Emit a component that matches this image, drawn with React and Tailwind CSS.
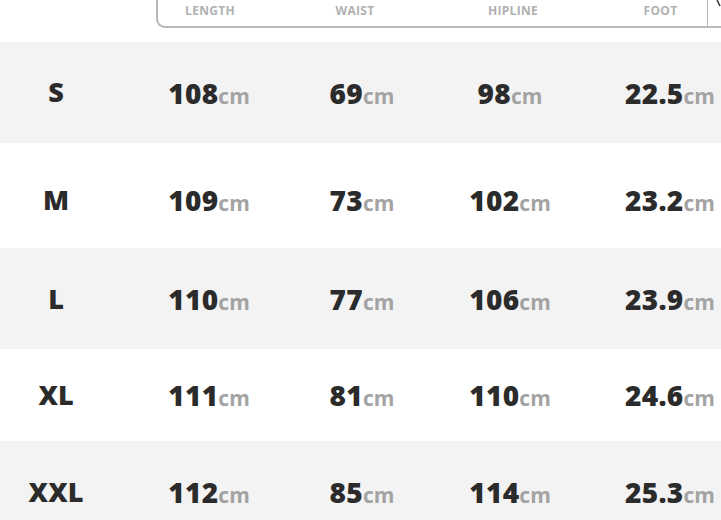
const rows = [
  { size: 'S', vals: ['108', '69', '98', '22.5'], h: 'h-[101px]', bg: 'bg-[#f4f3f4]', pt: 'pt-0' },
  { size: 'M', vals: ['109', '73', '102', '23.2'], h: 'h-[105px]', bg: 'bg-white', pt: 'pt-[9px]' },
  { size: 'L', vals: ['110', '77', '106', '23.9'], h: 'h-[101px]', bg: 'bg-[#f4f3f4]', pt: 'pt-px' },
  { size: 'XL', vals: ['111', '81', '110', '24.6'], h: 'h-[92px]', bg: 'bg-white', pt: 'pt-0' },
  { size: 'XXL', vals: ['112', '85', '114', '25.3'], h: 'h-[102px]', bg: 'bg-[#f4f3f4]', pt: 'pt-0' },
];

function Value({ v }) {
  return (
    <span className="flex items-baseline justify-center">
      <span className="text-[28px] font-extrabold tracking-[0.3px] text-[#2b2b2b]">{v}</span>
      <span className="text-[21px] font-bold text-[#a3a3a3]">cm</span>
    </span>
  );
}

export default function App() {
  return (
    <div className="relative h-[520px] w-[721px] overflow-hidden bg-white font-['Open_Sans',sans-serif]">
      <header className="flex h-[42px] items-start">
        <div className="w-[156px] shrink-0" />
        <div className="flex h-[28px] flex-1 rounded-bl-[9px] border-b-2 border-l-2 border-[#b8b8b8] text-[12px] font-bold leading-none tracking-[0.3px] text-[#b0b0b0]">
          <span className="flex w-[104px] items-center justify-center pb-[5px]">LENGTH</span>
          <span className="flex w-[186px] items-center justify-center pb-[5px]">WAIST</span>
          <span className="flex w-[130px] items-center justify-center pb-[5px]">HIPLINE</span>
          <span className="w-[36px]" />
          <span className="flex w-[94px] items-center justify-center border-r border-[#b8b8b8] pb-[5px]">FOOT</span>
        </div>
      </header>
      <svg className="absolute right-0 top-0" width="5" height="7" viewBox="0 0 5 7">
        <path d="M1 0 L4 6" stroke="#333" strokeWidth="1.5" />
      </svg>

      <div className="w-[738px]">
        {rows.map((r) => (
          <div
            key={r.size}
            className={`grid grid-cols-[112px_194px_112px_184px_136px] items-center ${r.h} ${r.bg} ${r.pt}`}
          >
            <span className="text-center text-[27px] font-extrabold text-[#2b2b2b]">{r.size}</span>
            {r.vals.map((v, i) => (
              <Value key={i} v={v} />
            ))}
          </div>
        ))}
      </div>
    </div>
  );
}
